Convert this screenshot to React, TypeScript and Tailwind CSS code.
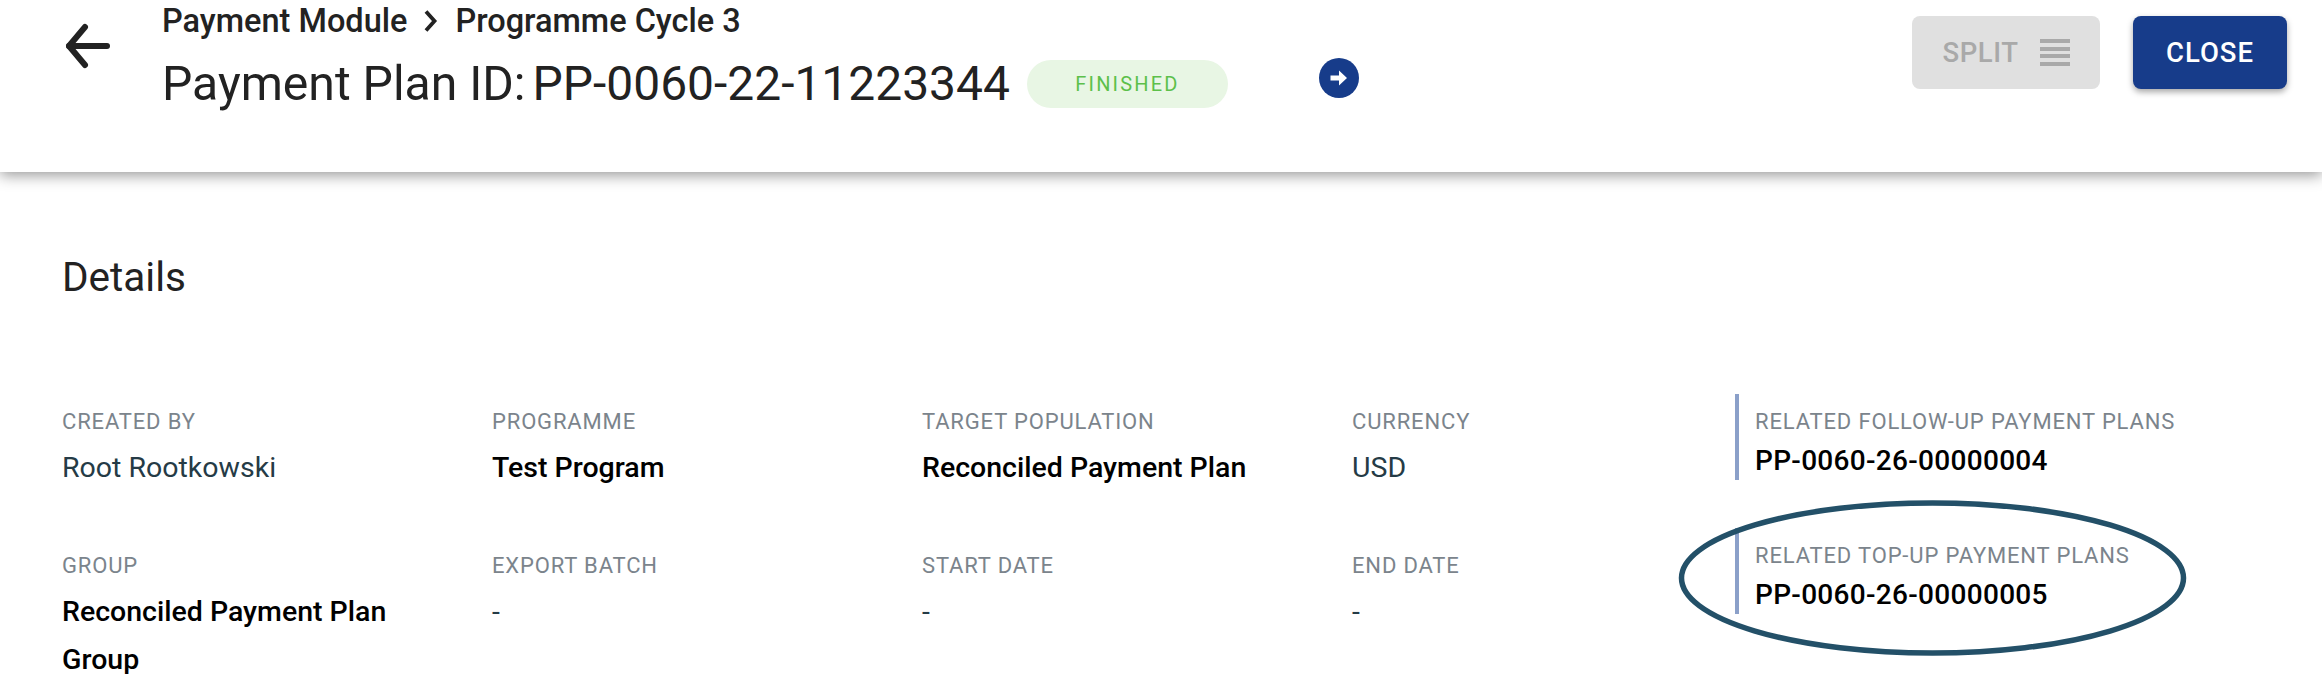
const rows = [
  [
    { label: "CREATED BY", value: "Root Rootkowski" },
    { label: "PROGRAMME", value: "Test Program", strong: true },
    { label: "TARGET POPULATION", value: "Reconciled Payment Plan", strong: true },
    { label: "CURRENCY", value: "USD" },
  ],
  [
    { label: "GROUP", value: "Reconciled Payment Plan Group", strong: true },
    { label: "EXPORT BATCH", value: "-" },
    { label: "START DATE", value: "-" },
    { label: "END DATE", value: "-" },
  ],
];

const related = [
  { label: "RELATED FOLLOW-UP PAYMENT PLANS", value: "PP-0060-26-00000004" },
  { label: "RELATED TOP-UP PAYMENT PLANS", value: "PP-0060-26-00000005" },
];

const Field = ({ label, value, strong }: { label: string; value: string; strong?: boolean }) => (
  <div className="pr-[36px]">
    <div className="text-[22px] leading-[28px] tracking-[0.85px] text-[#7b848c]">{label}</div>
    <div className={`mt-[8px] text-[28.5px] leading-[48px] ${strong ? "font-medium text-black" : "text-[#253b46]"}`}>{value}</div>
  </div>
);

const App = () => {
  return (
    <div className="relative h-[674px] w-[2322px] overflow-hidden bg-white font-['Roboto',sans-serif]">
      <header className="flex h-[172px] items-start bg-white pl-[64px] pr-[35px] pt-[16px] shadow-[0_3px_14px_rgba(0,0,0,0.42)]">
        <svg className="mt-[7px] shrink-0" width="48" height="48" viewBox="0 0 48 48" fill="none" stroke="#222" strokeWidth="6" strokeLinecap="round" strokeLinejoin="round">
          <path d="M43 23H5" />
          <path d="M21 4 5 23l16 19" />
        </svg>
        <div className="ml-[50px] mt-[-15px]">
          <div className="flex h-[40px] items-center text-[32.5px] font-medium text-[#222]">
            Payment Module
            <svg className="ml-[17px] mr-[17px]" width="14" height="22" viewBox="0 0 14 22" fill="none" stroke="#222" strokeWidth="3.8">
              <path d="M2 1.5 10.5 11 2 20.5" />
            </svg>
            Programme Cycle 3
          </div>
          <div className="mt-[19px] flex h-[48px] items-center">
            <h1 className="flex text-[48.1px] leading-[48px] text-[#222]">
              <span>Payment Plan ID:</span>
              <span className="ml-[7px] text-[47.95px]">PP-0060-22-11223344</span>
            </h1>
            <span className="ml-[17px] flex h-[48px] w-[201px] items-center justify-center rounded-full bg-[#e8f6e4] text-[20px] tracking-[2.2px] text-[#5cc04a]">FINISHED</span>
            <span className="mb-[13px] ml-[91px] flex h-[40px] w-[40px] items-center justify-center rounded-full bg-[#173c8a]">
              <svg width="40" height="40" viewBox="0 0 40 40" fill="#fff">
                <path d="M11.5 17.5H20v-5l8 7.5-8 7.5v-5h-8.5z" />
              </svg>
            </span>
          </div>
        </div>
        <div className="ml-auto flex gap-[33px]">
          <button className="flex h-[73px] w-[188px] items-center justify-center gap-[21px] rounded-[8px] bg-[#e0e0e0] text-[27.5px] font-medium tracking-[0.6px] text-[#a9a9a9]">
            SPLIT
            <span className="flex w-[30px] flex-col gap-[3.7px]">
              <span className="h-[4px] bg-[#a9a9a9]" />
              <span className="h-[4px] bg-[#a9a9a9]" />
              <span className="h-[4px] bg-[#a9a9a9]" />
              <span className="h-[4px] bg-[#a9a9a9]" />
            </span>
          </button>
          <button className="h-[73px] w-[154px] rounded-[8px] bg-[#173c8a] text-[27.5px] font-medium tracking-[1px] text-white shadow-[0_3px_6px_rgba(0,0,0,0.35)]">CLOSE</button>
        </div>
      </header>

      <main className="pl-[62px] pt-[80px]">
        <h2 className="text-[40.5px] leading-[50px] text-[#222]">Details</h2>
        <div className="mt-[106px] flex">
          <div className="flex w-[1673px] shrink-0 flex-col gap-[60px]">
            {rows.map((row, i) => (
              <div key={i} className="grid grid-cols-[430px_430px_430px_383px]">
                {row.map((f) => (
                  <Field key={f.label} {...f} />
                ))}
              </div>
            ))}
          </div>
          <div className="mt-[-14px] flex flex-col gap-[48px]">
            {related.map((r) => (
              <div key={r.label} className="h-[86px] border-l-[4px] border-[#8ba0c9] pl-[16px] pt-[14px]">
                <div className="whitespace-nowrap text-[22px] leading-[28px] tracking-[0.85px] text-[#7b848c]">{r.label}</div>
                <div className="mt-[6px] text-[28px] font-medium leading-[38px] tracking-[0.3px] text-black">{r.value}</div>
              </div>
            ))}
          </div>
        </div>
      </main>

      <svg className="absolute left-[1678px] top-[500px]" width="510" height="156" viewBox="0 0 510 156" fill="none">
        <ellipse cx="254.5" cy="78" rx="251" ry="75" stroke="#235068" strokeWidth="5.5" />
      </svg>
    </div>
  );
};

export default App;
